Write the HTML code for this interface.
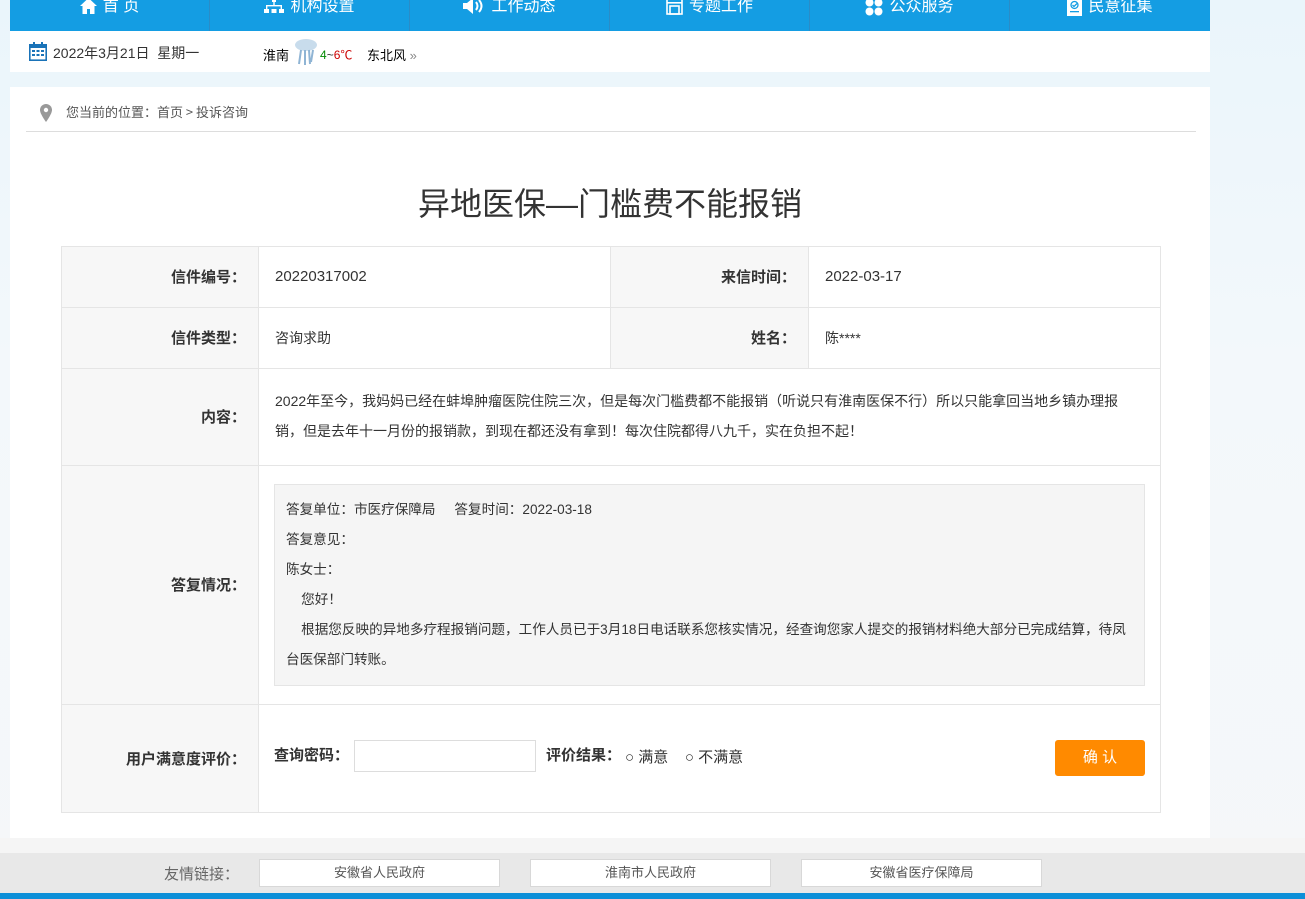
<!DOCTYPE html>
<html><head><meta charset="utf-8"><style>
*{margin:0;padding:0;box-sizing:border-box}
body{width:1305px;height:899px;overflow:hidden;position:relative;font-family:"Liberation Sans","Noto Sans CJK SC",sans-serif;color:#333;background:linear-gradient(180deg,#eaf5fb 0%,#f3f8fb 40%,#f5f7f9 100%)}
.abs{position:absolute}
.nav{left:10px;top:0;width:1200px;height:31px;background:#149de3;display:flex}
.nav div{width:200px;height:31px;border-right:1px solid #2a8cc8;color:#fff;font-size:16px;line-height:14px;text-align:center;display:flex;justify-content:center;align-items:flex-start;gap:6px}
.nav div:last-child{border-right:none}
.nav svg{margin-top:-2px}
.bar{left:10px;top:31px;width:1200px;height:41px;background:#fff;font-size:14px;color:#333}
.main{left:10px;top:87px;width:1200px;height:751px;background:#fff}
.t{position:absolute;font-size:14px}
.lab{background:#f7f7f7;font-weight:bold;font-size:15px;text-align:right;color:#333;font-family:"Noto Sans CJK SC",sans-serif}
.cell{position:absolute;border:1px solid #e5e5e5}
.fl{left:0;top:853px;width:1305px;height:40px;background:#e8e8e8}
.fb{position:absolute;top:6px;height:28px;width:241px;background:#fff;border:1px solid #d8d8d8;font-size:13px;color:#555;text-align:center;line-height:26px}
</style></head><body>
<div class="abs nav">
<div><svg width="17" height="16" viewBox="0 0 17 16"><path d="M8.5 0L0 8h2.5v8h4.5v-5h3v5h4.5V8H17z" fill="#fff"/></svg>首 页</div>
<div><svg width="20" height="16" viewBox="0 0 20 16"><rect x="8" y="0" width="4" height="4" fill="#fff"/><rect x="9.3" y="4" width="1.4" height="4" fill="#fff"/><rect x="2" y="7" width="16" height="1.4" fill="#fff"/><rect x="2" y="7" width="1.4" height="4" fill="#fff"/><rect x="16.6" y="7" width="1.4" height="4" fill="#fff"/><rect x="0" y="11" width="5" height="4" fill="#fff"/><rect x="7.5" y="11" width="5" height="4" fill="#fff"/><rect x="15" y="11" width="5" height="4" fill="#fff"/></svg>机构设置</div>
<div><svg width="22" height="16" viewBox="0 0 22 16"><path d="M0 5h4l6-5v16l-6-5H0z" fill="#fff"/><path d="M13 4q3 4 0 8M16 2q5 6 0 12" stroke="#fff" stroke-width="2" fill="none"/></svg>工作动态</div>
<div><svg width="17" height="17" viewBox="0 0 17 17"><rect x="1" y="1" width="15" height="15" fill="none" stroke="#fff" stroke-width="1.6"/><rect x="1" y="4" width="15" height="1.6" fill="#fff"/><rect x="4" y="8" width="9" height="8" fill="none" stroke="#fff" stroke-width="1.6"/></svg>专题工作</div>
<div><svg width="18" height="18" viewBox="0 0 18 18"><circle cx="4.5" cy="4.5" r="4" fill="#fff"/><circle cx="13.5" cy="4.5" r="4" fill="#fff"/><circle cx="4.5" cy="13.5" r="4" fill="#fff"/><circle cx="13.5" cy="13.5" r="4" fill="#fff"/></svg>公众服务</div>
<div><svg width="15" height="18" viewBox="0 0 15 18"><rect width="15" height="18" fill="#fff"/><circle cx="7.5" cy="7" r="3.5" fill="none" stroke="#149de3" stroke-width="1.3"/><path d="M5.5 7l1.5 1.5 3-3" stroke="#149de3" stroke-width="1.3" fill="none"/><rect x="3" y="13" width="9" height="1.3" fill="#149de3"/></svg>民意征集</div>
</div>
<div class="abs bar">
<svg class="abs" style="left:19px;top:11px" width="18" height="19" viewBox="0 0 18 19"><rect x="0.8" y="2.8" width="16.4" height="15.4" fill="none" stroke="#1a73b8" stroke-width="1.6"/><rect x="0" y="2" width="18" height="4" fill="#1a73b8"/><rect x="4" y="0" width="2" height="4" fill="#1a73b8"/><rect x="12" y="0" width="2" height="4" fill="#1a73b8"/><g fill="#1a73b8"><rect x="3" y="8" width="3" height="2"/><rect x="7.5" y="8" width="3" height="2"/><rect x="12" y="8" width="3" height="2"/><rect x="3" y="12" width="3" height="2"/><rect x="7.5" y="12" width="3" height="2"/><rect x="12" y="12" width="3" height="2"/></g></svg>
<span class="t" style="left:43px;top:12px">2022年3月21日&nbsp; 星期一</span>
<span class="t" style="left:253px;top:14px;font-size:13px;color:#000">淮南</span>
<svg class="abs" style="left:283px;top:6px" width="26" height="30" viewBox="0 0 26 30"><ellipse cx="13" cy="8" rx="11" ry="6" fill="#c8dcec"/><path d="M8 13l-2 14M12 13l0 15M16 13l1 14M20 13l-2 12" stroke="#8fb4d4" stroke-width="2"/></svg>
<span class="t" style="left:310px;top:15px;font-size:12px"><span style="color:#080">4</span>~<span style="color:#c00">6℃</span></span>
<span class="t" style="left:357px;top:14px;font-size:13px;color:#000">东北风 <span style="color:#888">»</span></span>
</div>
<div class="abs main">
<svg class="abs" style="left:30px;top:17px" width="12" height="18" viewBox="0 0 12 18"><path d="M6 0a6 6 0 0 0-6 6c0 4 6 12 6 12s6-8 6-12a6 6 0 0 0-6-6z" fill="#999"/><circle cx="6" cy="6" r="2.2" fill="#fff"/></svg>
<span class="t" style="left:56px;top:15px;font-size:13px;color:#555;font-family:'Noto Sans CJK SC',sans-serif">您当前的位置：首页 &gt; 投诉咨询</span>
<div class="abs" style="left:16px;top:44px;width:1170px;height:1px;background:#ddd"></div>
<div class="abs" style="left:0;top:92px;width:1200px;text-align:center;font-size:32px;color:#333">异地医保—门槛费不能报销</div>

<div class="cell lab" style="left:51px;top:159px;width:198px;height:62px;line-height:60px;padding-right:12px">信件编号：</div>
<div class="cell" style="left:248px;top:159px;width:353px;height:62px;line-height:60px;padding-left:16px;font-size:15px">20220317002</div>
<div class="cell lab" style="left:600px;top:159px;width:199px;height:62px;line-height:60px;padding-right:12px">来信时间：</div>
<div class="cell" style="left:798px;top:159px;width:353px;height:62px;line-height:60px;padding-left:16px;font-size:15px">2022-03-17</div>

<div class="cell lab" style="left:51px;top:220px;width:198px;height:62px;line-height:60px;padding-right:12px">信件类型：</div>
<div class="cell" style="left:248px;top:220px;width:353px;height:62px;line-height:60px;padding-left:16px;font-size:14px">咨询求助</div>
<div class="cell lab" style="left:600px;top:220px;width:199px;height:62px;line-height:60px;padding-right:12px">姓名：</div>
<div class="cell" style="left:798px;top:220px;width:353px;height:62px;line-height:60px;padding-left:16px;font-size:14px">陈****</div>

<div class="cell lab" style="left:51px;top:281px;width:198px;height:98px;line-height:96px;padding-right:12px">内容：</div>
<div class="cell" style="left:248px;top:281px;width:903px;height:98px;padding:17px 16px 0;font-size:14px;line-height:30px">2022年至今，我妈妈已经在蚌埠肿瘤医院住院三次，但是每次门槛费都不能报销（听说只有淮南医保不行）所以只能拿回当地乡镇办理报销，但是去年十一月份的报销款，到现在都还没有拿到！每次住院都得八九千，实在负担不起！</div>

<div class="cell lab" style="left:51px;top:378px;width:198px;height:240px;line-height:238px;padding-right:12px">答复情况：</div>
<div class="cell" style="left:248px;top:378px;width:903px;height:240px"></div>
<div class="abs" style="left:264px;top:397px;width:871px;height:202px;background:#f5f5f5;border:1px solid #e5e5e5;padding:10px 11px 0;font-size:13.6px;line-height:30px;color:#333">
答复单位：市医疗保障局&nbsp;&nbsp;&nbsp;&nbsp; 答复时间：2022-03-18<br>答复意见：<br>陈女士：<br>&nbsp;&nbsp;&nbsp;&nbsp;您好！<br>&nbsp;&nbsp;&nbsp;&nbsp;根据您反映的异地多疗程报销问题，工作人员已于3月18日电话联系您核实情况，经查询您家人提交的报销材料绝大部分已完成结算，待凤台医保部门转账。</div>

<div class="cell lab" style="left:51px;top:617px;width:198px;height:109px;line-height:107px;padding-right:12px">用户满意度评价：</div>
<div class="cell" style="left:248px;top:617px;width:903px;height:109px"></div>
<span class="t" style="left:264px;top:657px;font-size:15px;font-weight:bold;font-family:'Noto Sans CJK SC',sans-serif">查询密码：</span>
<div class="abs" style="left:344px;top:653px;width:182px;height:32px;border:1px solid #ddd;background:#fff"></div>
<span class="t" style="left:536px;top:657px;font-size:15px;font-weight:bold;font-family:'Noto Sans CJK SC',sans-serif">评价结果：</span>
<span class="t" style="left:615px;top:659px;font-size:15px">○ 满意&nbsp;&nbsp;&nbsp; ○ 不满意</span>
<div class="abs" style="left:1045px;top:653px;width:90px;height:36px;background:#ff8a00;border-radius:3px;color:#fff;font-size:15px;text-align:center;line-height:36px">确 认</div>
</div>
<div class="abs" style="left:0;top:838px;width:1305px;height:15px;background:#f5f5f5"></div>
<div class="abs fl">
<span class="t" style="left:164px;top:10px;color:#666;font-size:15px">友情链接：</span>
<div class="fb" style="left:259px">安徽省人民政府</div>
<div class="fb" style="left:530px">淮南市人民政府</div>
<div class="fb" style="left:801px">安徽省医疗保障局</div>
</div>
<div class="abs" style="left:0;top:893px;width:1305px;height:6px;background:#0c8fd8"></div>
</body></html>
